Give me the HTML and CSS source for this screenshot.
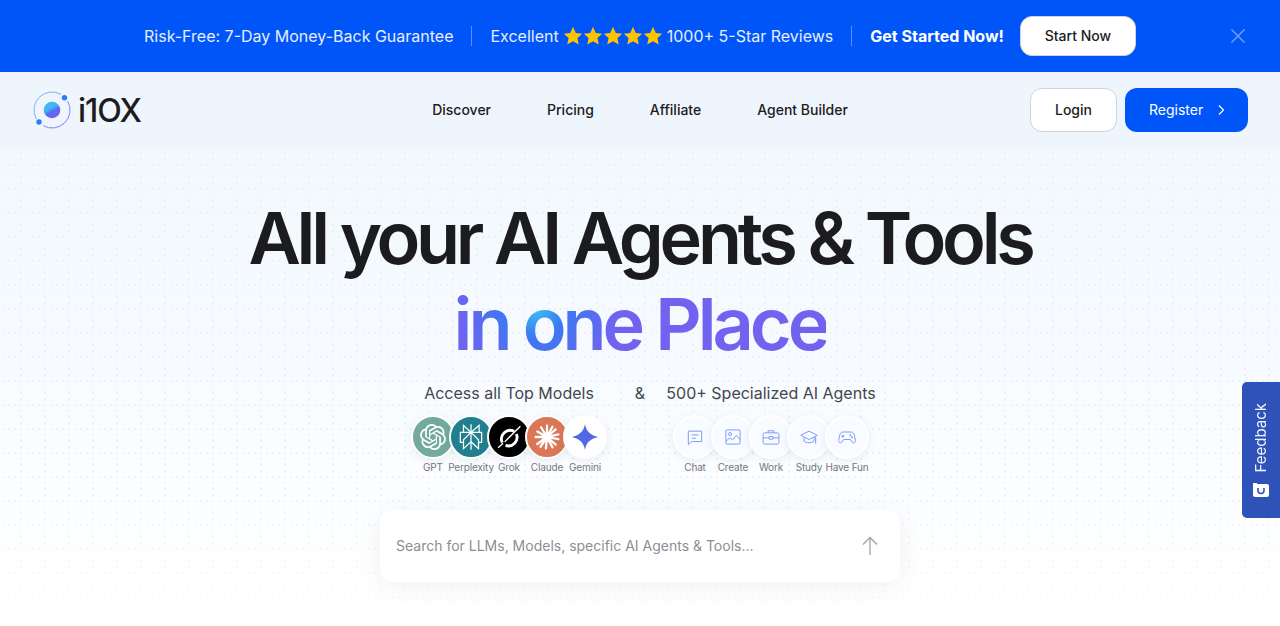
FILE: index.html
```html
<!DOCTYPE html>
<html lang="en">
<head>
<meta charset="utf-8">
<title>i10X</title>
<link rel="stylesheet" href="styles.css">
</head>
<body>
<div class="banner">
  <span class="banner-text">Risk-Free: 7-Day Money-Back Guarantee</span>
  <span class="banner-sep"></span>
  <span class="banner-text">Excellent</span>
  <span class="stars">
    <svg viewBox="0 0 24 24"><path d="M12 1l3.300 7.300 7.700.9-5.700 5.300 1.600 7.800-6.900-4-6.900 4 1.600-7.800L1 9.200l7.700-.9z"/></svg>
    <svg viewBox="0 0 24 24"><path d="M12 1l3.300 7.300 7.700.9-5.700 5.300 1.600 7.800-6.900-4-6.900 4 1.600-7.800L1 9.200l7.700-.9z"/></svg>
    <svg viewBox="0 0 24 24"><path d="M12 1l3.300 7.300 7.700.9-5.700 5.300 1.600 7.800-6.900-4-6.900 4 1.600-7.800L1 9.200l7.700-.9z"/></svg>
    <svg viewBox="0 0 24 24"><path d="M12 1l3.300 7.300 7.700.9-5.700 5.300 1.600 7.800-6.900-4-6.900 4 1.600-7.800L1 9.200l7.700-.9z"/></svg>
    <svg viewBox="0 0 24 24"><path d="M12 1l3.300 7.300 7.700.9-5.700 5.300 1.600 7.800-6.900-4-6.900 4 1.600-7.800L1 9.200l7.700-.9z"/></svg>
  </span>
  <span class="banner-text">1000+ 5-Star Reviews</span>
  <span class="banner-sep"></span>
  <strong class="banner-cta">Get Started Now!</strong>
  <a class="btn btn-white banner-btn">Start Now</a>
  <svg class="banner-close" viewBox="0 0 16 16"><path d="M1.500 1.500l13 13M14.500 1.500l-13 13"/></svg>
</div>

<header class="nav">
  <div class="logo">
    <svg class="logo-mark" viewBox="0 0 40 40">
      <defs>
        <linearGradient id="lg1" x1="0.250" y1="0.050" x2="0.750" y2="0.950"><stop offset="0.350" stop-color="#3fb8f5"/><stop offset="0.600" stop-color="#5a6cf0"/><stop offset="1" stop-color="#7a5cf0"/></linearGradient>
        <linearGradient id="lg2" x1="0" y1="0" x2="1" y2="1"><stop offset="0" stop-color="#7cc4fb"/><stop offset="1" stop-color="#8a6cf5"/></linearGradient>
      </defs>
      <path d="M29 4.400A18 18 0 0 0 4.400 29M11 35.600A18 18 0 0 0 35.600 11" fill="none" stroke="url(#lg2)" stroke-width="1"/>
      <circle cx="20" cy="20" r="8.300" fill="url(#lg1)"/>
      <circle cx="32.500" cy="7.700" r="2.700" fill="#2f7bf8"/>
      <circle cx="7" cy="32" r="2.700" fill="#2f7bf8"/>
    </svg>
    <span class="logo-text">i1OX</span>
  </div>
  <nav class="nav-links">
    <a>Discover</a>
    <a>Pricing</a>
    <a>Affiliate</a>
    <a>Agent Builder</a>
  </nav>
  <div class="nav-actions">
    <a class="btn btn-white login">Login</a>
    <a class="btn btn-blue register">Register
      <svg viewBox="0 0 12 12"><path d="M4 1.500L8.500 6 4 10.500"/></svg>
    </a>
  </div>
</header>

<main class="hero">
  <svg class="dots" aria-hidden="true">
    <defs>
      <pattern id="dotgrid" width="24" height="24" patternUnits="userSpaceOnUse" x="20" y="16">
        <path d="M0 0h2v2H0zM0 6h2v2H0zM0 12h2v2H0zM0 18h2v2H0zM6 0h2v2H6zM12 0h2v2h-2zM18 0h2v2h-2z"/>
      </pattern>
    </defs>
    <rect width="100%" height="100%" fill="url(#dotgrid)"/>
  </svg>
  <h1 class="title">All your AI Agents &amp; Tools</h1>
  <h2 class="subtitle"><span>in one Place</span></h2>
  <div class="columns">
    <section class="col">
      <p class="col-title">Access all Top Models</p>
      <div class="chips">
        <div class="chip">
          <span class="disc disc-gpt">
            <svg viewBox="0 0 24 24" fill="#fff"><path d="M22.2819 9.8211a5.9847 5.9847 0 0 0-.5157-4.9108 6.0462 6.0462 0 0 0-6.5098-2.9A6.0651 6.0651 0 0 0 4.9807 4.1818a5.9847 5.9847 0 0 0-3.9977 2.9 6.0462 6.0462 0 0 0 .7427 7.0966 5.98 5.98 0 0 0 .511 4.9107 6.051 6.051 0 0 0 6.5146 2.9001A5.9847 5.9847 0 0 0 13.2599 24a6.0557 6.0557 0 0 0 5.7718-4.2058 5.9894 5.9894 0 0 0 3.9977-2.9001 6.0557 6.0557 0 0 0-.7475-7.0729zm-9.022 12.6081a4.4755 4.4755 0 0 1-2.8764-1.0408l.1419-.0804 4.7783-2.7582a.7948.7948 0 0 0 .3927-.6813v-6.7369l2.02 1.1686a.071.071 0 0 1 .038.052v5.5826a4.504 4.504 0 0 1-4.4945 4.4944zm-9.6607-4.1254a4.4708 4.4708 0 0 1-.5346-3.0137l.142.0852 4.783 2.7582a.7712.7712 0 0 0 .7806 0l5.8428-3.3685v2.3324a.0804.0804 0 0 1-.0332.0615L9.74 19.9502a4.4992 4.4992 0 0 1-6.1408-1.6464zM2.3408 7.8956a4.485 4.485 0 0 1 2.3655-1.9728V11.6a.7664.7664 0 0 0 .3879.6765l5.8144 3.3543-2.0201 1.1685a.0757.0757 0 0 1-.071 0l-4.8303-2.7865A4.504 4.504 0 0 1 2.3408 7.872zm16.5963 3.8558L13.1038 8.364 15.1192 7.2a.0757.0757 0 0 1 .071 0l4.8303 2.7913a4.4944 4.4944 0 0 1-.6765 8.1042v-5.6772a.79.79 0 0 0-.407-.667zm2.0107-3.0231l-.142-.0852-4.7735-2.7818a.7759.7759 0 0 0-.7854 0L9.409 9.2297V6.8974a.0662.0662 0 0 1 .0284-.0615l4.8303-2.7866a4.4992 4.4992 0 0 1 6.6802 4.66zM8.3065 12.863l-2.02-1.1638a.0804.0804 0 0 1-.038-.0567V6.0742a4.4992 4.4992 0 0 1 7.3757-3.4537l-.142.0805L8.704 5.459a.7948.7948 0 0 0-.3927.6813zm1.0976-2.3654l2.602-1.4998 2.6069 1.4998v2.9994l-2.5974 1.4997-2.6067-1.4997Z"/></svg>
          </span>
          <span class="chip-label">GPT</span>
        </div>
        <div class="chip">
          <span class="disc disc-perp">
            <svg viewBox="0 0 24 24" fill="#fff"><path d="M22.3977 7.0896h-2.3106V.0676l-7.5094 6.3542V.1577h-1.1554v6.1966L4.4904 0v7.0896H1.6023v10.3976h2.8882V24l6.932-6.3591v6.2005h1.1554v-6.0469l6.9318 6.1807v-6.4879h2.8882V7.0896zm-3.4657-4.531v4.531h-5.355l5.355-4.531zm-13.2862.0676 4.8691 4.4634H5.6458V2.6262zM2.7576 16.332V8.245h7.8476l-6.1149 6.1147v1.9723H2.7576zm2.8882 5.0404v-3.8852h.0001v-2.6488l5.7763-5.7764v7.0111l-5.7764 5.2993zm12.7086.0248-5.7766-5.1509V9.0618l5.7766 5.7766v6.5588zm2.8882-5.0652h-1.733v-1.9723L13.3948 8.245h7.8478v8.087z"/></svg>
          </span>
          <span class="chip-label">Perplexity</span>
        </div>
        <div class="chip">
          <span class="disc disc-grok">
            <svg viewBox="0 0 24 24" fill="none" stroke="#fff"><path stroke-width="2.600" d="M16.800 6.800A8 8 0 0 0 5.800 17.200M18.800 9.200A8 8 0 0 1 8.800 19.800"/><path stroke-width="1.300" d="M8 16.500L22.500 2M2 22l4.500-4.200"/></svg>
          </span>
          <span class="chip-label">Grok</span>
        </div>
        <div class="chip">
          <span class="disc disc-claude">
            <svg viewBox="0 0 24 24" fill="none" stroke="#fff" stroke-width="2.100" stroke-linecap="round"><path d="M12 12V1.500M12 12l5-9.500M12 12l8-7M12 12l10.500-2.500M12 12l10.500 2M12 12l8 7M12 12l5 9.500M12 12l-1 10.500M12 12l-6 9M12 12l-9 6.500M12 12H1.500M12 12L3 7M12 12L6.500 3"/></svg>
          </span>
          <span class="chip-label">Claude</span>
        </div>
        <div class="chip">
          <span class="disc disc-gemini">
            <svg viewBox="0 0 24 24">
              <defs><linearGradient id="gem" x1="0" y1="0" x2="1" y2="1"><stop offset="0" stop-color="#3f78ee"/><stop offset="0.600" stop-color="#5565e0"/><stop offset="1" stop-color="#4a9cf0"/></linearGradient></defs>
              <path d="M12 0c1.200 6.200 3.800 9.800 12 12-8.200 2.200-10.800 5.800-12 12-1.200-6.200-3.800-9.800-12-12 8.200-2.200 10.800-5.800 12-12z" fill="url(#gem)"/>
            </svg>
          </span>
          <span class="chip-label">Gemini</span>
        </div>
      </div>
    </section>
    <span class="amp">&amp;</span>
    <section class="col">
      <p class="col-title">500+ Specialized AI Agents</p>
      <div class="chips">
        <div class="chip">
          <span class="disc disc-agent">
            <svg viewBox="0 0 24 24"><path d="M4 5h16v12.500H8l-4 3.500zM8 9.500h8M8 13.500h5"/></svg>
          </span>
          <span class="chip-label">Chat</span>
        </div>
        <div class="chip">
          <span class="disc disc-agent">
            <svg viewBox="0 0 24 24"><rect x="3.500" y="3.500" width="17" height="17" rx="1"/><circle cx="8.500" cy="8.500" r="1.800"/><path d="M3.500 17l5-4 3 2.500 4.500-5.500 4.500 5"/></svg>
          </span>
          <span class="chip-label">Create</span>
        </div>
        <div class="chip">
          <span class="disc disc-agent">
            <svg viewBox="0 0 24 24"><rect x="2.500" y="7" width="19" height="13.500" rx="2"/><path d="M8.500 7V4.500h7V7M2.500 13h7M14.500 13h7M9.500 11.500h5v3h-5z"/></svg>
          </span>
          <span class="chip-label">Work</span>
        </div>
        <div class="chip">
          <span class="disc disc-agent">
            <svg viewBox="0 0 24 24"><path d="M12 5L2 10l10 5 10-5zM6 12.500V17c2 2.500 10 2.500 12 0v-4.500M20 11v9"/></svg>
          </span>
          <span class="chip-label">Study</span>
        </div>
        <div class="chip">
          <span class="disc disc-agent">
            <svg viewBox="0 0 24 24"><path d="M7 6h10c2.500 0 3.500 2 4 5l1 5c.4 3-2.500 4-4 2l-2-3H8l-2 3c-1.500 2-4.400 1-4-2l1-5c.5-3 1.500-5 4-5zM7 9v4M5 11h4"/><circle cx="16" cy="10" r=".8"/><circle cx="18" cy="12.500" r=".8"/></svg>
          </span>
          <span class="chip-label">Have Fun</span>
        </div>
      </div>
    </section>
  </div>
  <div class="search">
    <span class="search-text">Search for LLMs, Models, specific AI Agents &amp; Tools...</span>
    <svg viewBox="0 0 20 20"><path d="M10 19V1.500M3 8.500l7-7 7 7"/></svg>
  </div>
</main>

<aside class="feedback">
  <span class="feedback-label">Feedback</span>
  <svg viewBox="0 0 16 14"><path d="M0 0h4v1h10a2 2 0 0 1 2 2v9a2 2 0 0 1-2 2H2a2 2 0 0 1-2-2z" fill="#fff"/><path d="M5 5v2.500a3 3 0 0 0 6 0V5" fill="none" stroke="#2f52b8" stroke-width="1.600"/></svg>
</aside>
</body>
</html>
```
FILE: styles.css
```css
* { box-sizing: border-box; }
html, body { margin: 0; padding: 0; height: 100%; overflow: hidden; }
body {
  position: relative;
  font-family: Inter, "Liberation Sans", sans-serif;
  color: #1c1c1e;
  background: #fff;
}
a { cursor: pointer; }
.banner {
  height: 72px;
  background: #0055f9;
  color: #fff;
  display: flex;
  align-items: center;
  justify-content: center;
  position: relative;
}
.banner-text { font-size: 16px; color: #e6eeff; }
.banner-sep { width: 1px; height: 20px; background: #5c92fb; margin: 0 18px; }
.banner-cta { font-size: 16px; font-weight: 700; }
.stars { display: flex; margin: 0 4px 0 4px; gap: 0; }
.stars svg { width: 20px; height: 20px; fill: #ffc400; }
.btn {
  display: flex;
  align-items: center;
  justify-content: center;
  font-size: 14px;
  font-weight: 500;
  line-height: 20px;
  border-radius: 12px;
  height: 44px;
}
.btn-white { background: #fff; color: #1c1c1e; border: 1px solid #d0d3da; }
.btn-blue { background: #0055f9; color: #fff; }
.banner-btn { width: 116px; height: 40px; margin-left: 16px; }
.banner-close { position: absolute; right: 34px; top: 28px; width: 16px; height: 16px; fill: none; stroke: #6a9cfb; stroke-width: 1.600; }

.nav {
  height: 76px;
  background: #eef5fc;
  display: grid;
  grid-template-columns: 1fr auto 1fr;
  align-items: center;
  padding: 0 32px;
}
.logo { display: flex; align-items: center; gap: 6px; }
.logo-mark { width: 40px; height: 40px; }
.logo-text { font-size: 32px; font-weight: 500; letter-spacing: -1px; color: #1c1c1e; }
.nav-links { display: flex; gap: 56px; font-size: 14px; font-weight: 500; line-height: 20px; margin-top: -1px; }
.nav-actions { display: flex; gap: 8px; justify-content: flex-end; }
.login { width: 87px; }
.register { width: 123px; gap: 12px; justify-content: flex-start; padding-left: 24px; font-weight: 400; }
.register svg { width: 12px; height: 12px; fill: none; stroke: #fff; stroke-width: 1.200; }

.hero {
  height: 478px;
  position: relative;
  display: flex;
  flex-direction: column;
  align-items: center;
  padding-top: 48px;
  background: linear-gradient(180deg, #f2f8fd 0%, #f7fbff 45%, #fff 90%);
}
.dots {
  position: absolute;
  left: 0;
  top: 0;
  width: 100%;
  height: 100%;
  fill: #ecf1f7;
  -webkit-mask-image: linear-gradient(180deg, #000 0%, #000 65%, rgba(0,0,0,0.2) 100%);
  mask-image: linear-gradient(180deg, #000 0%, #000 65%, rgba(0,0,0,0.2) 100%);
}
.title {
  position: relative;
  margin: 0;
  font-size: 72px;
  line-height: 84px;
  font-weight: 600;
  letter-spacing: -4.250px;
  color: #1c1c1e;
}
.subtitle {
  position: relative;
  margin: 0;
  font-size: 72px;
  line-height: 88px;
  font-weight: 600;
  letter-spacing: -4px;
}
.subtitle span {
  background: radial-gradient(circle 82px at 82px 28px, #3cc0f5 0, #3c78f0 36%, #7063f0 100%);
  -webkit-background-clip: text;
  background-clip: text;
  color: transparent;
}
.columns { position: relative; display: flex; align-items: flex-start; margin-top: 13px; }
.col { width: 220px; display: flex; flex-direction: column; align-items: center; }
.col-title { margin: 0; font-size: 16px; line-height: 24px; color: #44474d; white-space: nowrap; }
.amp { width: 42px; text-align: center; font-size: 16px; line-height: 24px; color: #44474d; }
.chips { display: flex; margin-top: 10px; }
.chip { width: 38px; display: flex; flex-direction: column; align-items: center; }
.disc {
  width: 44px;
  height: 44px;
  flex: none;
  border-radius: 50%;
  border: 2px solid #fff;
  box-shadow: 0 2px 8px rgba(60, 80, 120, 0.10);
  display: flex;
  align-items: center;
  justify-content: center;
  position: relative;
}
.disc svg { width: 26px; height: 26px; }
.disc-gpt { background: #74aa9c; }
.disc-perp { background: #20808d; }
.disc-grok { background: #000; }
.disc-claude { background: #da7756; }
.disc-gemini { background: #fff; }
.disc-agent { background: #f8fbff; }
.disc-agent svg { width: 20px; height: 20px; fill: none; stroke: #7d9cf5; stroke-width: 1.200; }
.chip-label { font-size: 10px; line-height: 14px; margin-top: 1px; color: #74777e; white-space: nowrap; letter-spacing: -0.150px; }
.search {
  position: relative;
  width: 520px;
  height: 72px;
  margin-top: 36px;
  background: #fff;
  border-radius: 12px;
  box-shadow: 0 4px 24px rgba(60, 80, 120, 0.08);
  display: flex;
  align-items: center;
  justify-content: space-between;
  padding: 0 20px 0 16px;
}
.search-text { font-size: 14px; color: #8b8e95; margin-top: -1px; }
.search svg { width: 20px; height: 20px; fill: none; stroke: #a0a3a9; stroke-width: 1.300; }
.feedback {
  position: absolute;
  right: 0;
  top: 382px;
  width: 38px;
  height: 136px;
  background: #2f52b8;
  border-radius: 5px 0 0 5px;
  color: #eef2ff;
  display: flex;
  flex-direction: column;
  align-items: center;
  justify-content: flex-end;
  gap: 11px;
  padding: 0 1px 21px 0;
}
.feedback-label { writing-mode: vertical-rl; transform: rotate(180deg); font-size: 15px; }
.feedback svg { width: 16px; height: 14px; }
```
